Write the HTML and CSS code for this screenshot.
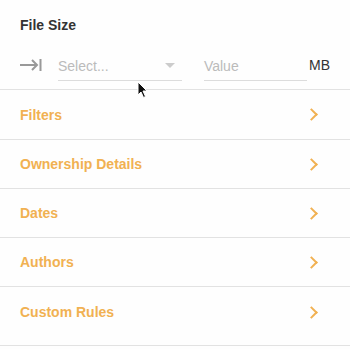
FILE: index.html
```html
<!DOCTYPE html>
<html lang="en">
<head>
  <meta charset="UTF-8" />
  <title>File Size</title>
  <link rel="stylesheet" href="styles.css">
</head>
<body>
  <div class="panel">
    <div class="size-section">
      <div class="section-title">File Size</div>
      <div class="size-row">
        <svg class="size-icon" width="22" height="14" viewBox="0 0 22 14">
          <path d="M0 7 H17 M12 2 L17 7 L12 12" fill="none" stroke="#999" stroke-width="2"/>
          <path d="M20.5 1 V13" stroke="#999" stroke-width="2"/>
        </svg>
        <div class="field select-field">
          <span class="placeholder">Select...</span>
          <span class="caret"></span>
        </div>
        <div class="field value-field">
          <span class="placeholder">Value</span>
        </div>
        <span class="unit">MB</span>
      </div>
      <!-- mouse pointer from the capture -->
      <svg class="pointer" width="12" height="18" viewBox="0 0 12 18">
        <path d="M1 1 V14 L4 11 L6.5 16.5 L8.5 15.5 L6 10 H10 Z" fill="#111" stroke="#fff" stroke-width="1"/>
      </svg>
    </div>

    <div class="nav-row first">Filters <span class="chevron"></span></div>
    <div class="nav-row">Ownership Details <span class="chevron"></span></div>
    <div class="nav-row">Dates <span class="chevron"></span></div>
    <div class="nav-row">Authors <span class="chevron"></span></div>
    <div class="nav-row last">Custom Rules <span class="chevron"></span></div>
  </div>
</body>
</html>
```

FILE: styles.css
```css
body {
  margin: 0;
  background: #fefefe;
  font-family: "Liberation Sans", Arial, sans-serif;
  font-size: 14px;
}

.panel {
  width: 350px;
}

/* top block with the size filter */
.size-section {
  position: relative;
  padding: 17px 20px 0 20px;
  height: 72px;
  border-bottom: 1px solid #e2e2e2;
}

.section-title {
  font-weight: bold;
  color: #333;
  line-height: 16px;
}

.size-row {
  display: flex;
  align-items: flex-end;
  margin-top: 23px;
}

.size-icon {
  margin: 0 16px 9px 0;
  flex: none;
}

.field {
  display: flex;
  align-items: center;
  height: 19px;
  padding-bottom: 5px;
  border-bottom: 1px solid #dcdcdc;
}

.placeholder {
  color: #bbb;
}

.select-field {
  width: 125px;
  justify-content: space-between;
  margin-right: 22px;
}

.caret {
  width: 0;
  height: 0;
  border-left: 5px solid transparent;
  border-right: 5px solid transparent;
  border-top: 5px solid #ccc;
  margin-right: 7px;
}

.value-field {
  width: 104px;
  margin-right: 2px;
}

.unit {
  color: #333;
  line-height: 19px;
  padding-bottom: 6px;
}

.pointer {
  position: absolute;
  left: 137px;
  top: 81px;
}

/* navigation rows */
.nav-row {
  display: flex;
  justify-content: space-between;
  align-items: center;
  box-sizing: border-box;
  height: 49px;
  padding: 0 34px 0 20px;
  border-bottom: 1px solid #e2e2e2;
  color: #f1b152;
  font-weight: bold;
}

.nav-row.first {
  height: 50px;
}

.nav-row.last {
  align-items: flex-start;
  padding-top: 17px;
  height: 59px;
}

.chevron {
  width: 7px;
  height: 7px;
  border-top: 2px solid #f1b152;
  border-right: 2px solid #f1b152;
  transform: rotate(45deg);
}

.nav-row.last .chevron {
  margin-top: 4px;
}
```
